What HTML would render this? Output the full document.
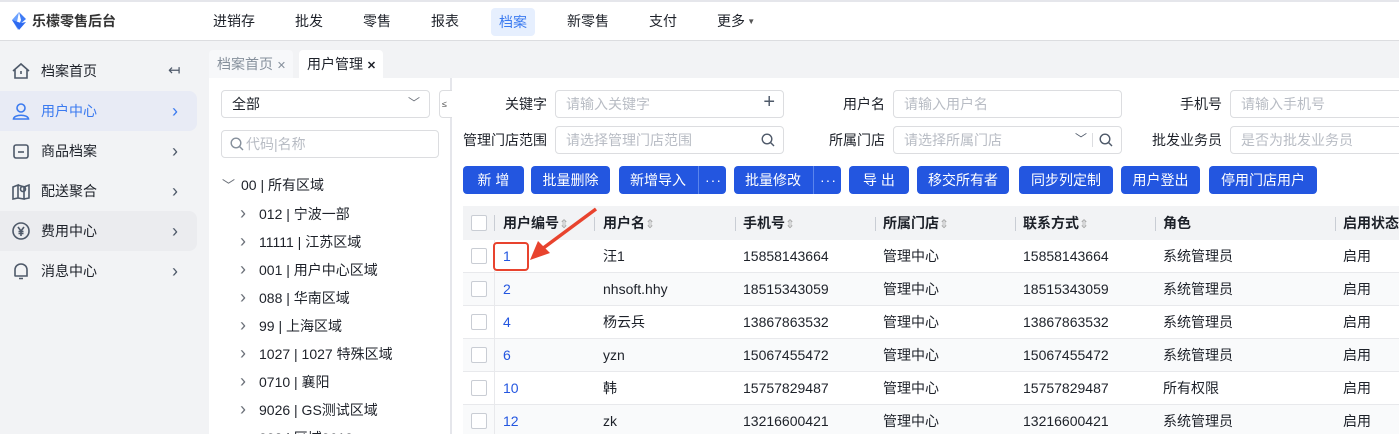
<!DOCTYPE html>
<html><head><meta charset="utf-8"><style>
*{box-sizing:border-box;margin:0;padding:0}
html,body{width:1399px;height:434px;overflow:hidden}
body{background:#f2f3f5;font-family:"Liberation Sans","Noto Sans CJK SC",sans-serif;font-size:14px;color:#1d2129;position:relative}
.a{position:absolute;white-space:nowrap}
.top{left:0;top:0;width:1399px;height:41px;background:#fff;border-top:2px solid #e5e6eb;border-bottom:1px solid #dcdde0}
.nav{top:10px;font-size:14px;color:#1d2129;line-height:22px}
.side{left:0;top:42px;width:209px;height:392px;background:#f2f3f5}
.si{left:0;width:197px;height:40px;border-radius:0 8px 8px 0;font-size:14px;line-height:40px}
.si .t{position:absolute;left:41px}
.si .ch{position:absolute;left:172px;top:0;color:#4e5969;font-size:18px}
.ic{position:absolute;left:11px;top:10px}
.lp{left:209px;top:78px;width:241px;height:356px;background:#fff}
.rp{left:452px;top:78px;width:947px;height:356px;background:#fff}
.inp{height:28px;border:1px solid #dcdde0;border-radius:4px;background:#fff;color:#b8bcc4;font-size:14px;line-height:26px;padding-left:10px}
.lbl{font-size:14px;line-height:28px;text-align:right}
.btn{top:166px;height:28px;background:#2356e0;color:#fff;border-radius:4px;font-size:14px;line-height:28px;text-align:center}
.tr{left:463px;width:936px;height:33px;border-bottom:1px solid #e8e9ec;line-height:32px;font-size:14px}
.tr span{position:absolute}
.cb{position:absolute;left:8px;top:8px;width:16px;height:16px;border:1.5px solid #c9cdd4;border-radius:2px;background:#fff}
.tree{left:222px;font-size:14px;line-height:28px}
.tree b{font-weight:normal;color:#6b7079;display:inline-block;width:19px;font-size:18px}
.so{font-weight:normal;color:#aaa;font-style:normal;font-size:12px}
</style></head><body>
<div class="a top"></div>
<svg class="a" style="left:10px;top:11px" width="18" height="20" viewBox="0 0 18 20"><path d="M9 1 L16 8 L9 14 L11 9 Z" fill="#3f7cf5"/><path d="M9 1 L2 9 L8 19 L7 11 Z" fill="#6aa1ff"/><path d="M2 9 L9 19 L16 11 L11 12 Z" fill="#2e6af0"/></svg>
<div class="a" style="left:32px;top:11px;font-size:14px;font-weight:bold;color:#333;line-height:20px">乐檬零售后台</div>
<div class="a nav" style="left:213px">进销存</div>
<div class="a nav" style="left:295px">批发</div>
<div class="a nav" style="left:363px">零售</div>
<div class="a nav" style="left:431px">报表</div>
<div class="a nav" style="left:491px;top:8px;width:44px;height:28px;background:#e6effe;border-radius:4px;color:#3a7af0;text-align:center;line-height:28px">档案</div>
<div class="a nav" style="left:567px">新零售</div>
<div class="a nav" style="left:649px">支付</div>
<div class="a nav" style="left:717px">更多<span style="font-size:8px;color:#555;vertical-align:2px"> ▼</span></div>

<div class="a side"></div>
<div class="a si" style="top:51px"><svg class="ic" width="20" height="20" viewBox="0 0 20 20" fill="none" stroke="#4e5969" stroke-width="1.6"><path d="M2 10 L10 3 L18 10 M4 8.5 V17 H16 V8.5"/><path d="M10 10 V13"/></svg><span class="t">档案首页</span><span class="ch" style="left:168px;font-size:15px">↤</span></div>
<div class="a si" style="top:91px;background:#e8ebf5;color:#3a7af0"><svg class="ic" width="20" height="20" viewBox="0 0 20 20" fill="none" stroke="#3a7af0" stroke-width="1.6"><circle cx="10" cy="7" r="4"/><path d="M2.5 18 C3 13 17 13 17.5 18 Z"/></svg><span class="t">用户中心</span><span class="ch" style="color:#3a7af0">›</span></div>
<div class="a si" style="top:131px"><svg class="ic" width="20" height="20" viewBox="0 0 20 20" fill="none" stroke="#4e5969" stroke-width="1.6"><rect x="3" y="4" width="14" height="13" rx="2"/><path d="M7 11 H13"/></svg><span class="t">商品档案</span><span class="ch">›</span></div>
<div class="a si" style="top:171px"><svg class="ic" width="20" height="20" viewBox="0 0 20 20" fill="none" stroke="#4e5969" stroke-width="1.6"><path d="M2 6 L7 4 V17 L2 18 Z M7 4 L13 6 V18 L7 17 M13 6 L18 4 V17 L13 18"/><circle cx="12" cy="8" r="2.5"/></svg><span class="t">配送聚合</span><span class="ch">›</span></div>
<div class="a si" style="top:211px;background:#ebecef"><svg class="ic" width="20" height="20" viewBox="0 0 20 20" fill="none" stroke="#4e5969" stroke-width="1.6"><circle cx="10" cy="10" r="8"/><path d="M7 6 L10 10 L13 6 M10 10 V15 M7.5 10.5 H12.5 M7.5 12.5 H12.5"/></svg><span class="t">费用中心</span><span class="ch">›</span></div>
<div class="a si" style="top:251px"><svg class="ic" width="20" height="20" viewBox="0 0 20 20" fill="none" stroke="#4e5969" stroke-width="1.6"><path d="M4 15 V9 C4 5 7 3 10 3 C13 3 16 5 16 9 V15 H3.5 H16.5 M8 17.5 H12"/></svg><span class="t">消息中心</span><span class="ch">›</span></div>

<div class="a" style="left:209px;top:50px;width:84px;height:28px;background:#f7f8fa;border-radius:4px 4px 0 0;color:#86909c;font-size:14px;line-height:28px;padding-left:8px">档案首页 <span style="font-size:11px">✕</span></div>
<div class="a" style="left:299px;top:50px;width:84px;height:28px;background:#fff;border-radius:4px 4px 0 0;font-size:14px;line-height:28px;padding-left:8px">用户管理 <span style="font-size:11px;font-weight:bold">✕</span></div>

<div class="a lp"></div>
<div class="a rp"></div>
<div class="a" style="left:450px;top:78px;width:2px;height:356px;background:#e5e6eb"></div>
<div class="a inp" style="left:221px;top:90px;width:209px;color:#1d2129">全部<span style="position:absolute;right:9px;top:-1px;color:#6b7079;font-size:12px">﹀</span></div>
<div class="a" style="left:439px;top:90px;width:13px;height:28px;border:1px solid #dcdde0;border-right:none;border-radius:4px 0 0 4px;background:#fff;font-size:9px;line-height:26px;color:#555;padding-left:2px">≤</div>
<div class="a inp" style="left:221px;top:130px;width:218px">
<svg style="position:absolute;left:8px;top:6px" width="14" height="14" viewBox="0 0 14 14" fill="none" stroke="#86909c" stroke-width="1.4"><circle cx="6" cy="6" r="4.8"/><path d="M9.5 9.5 L13 13"/></svg><span style="margin-left:14px">代码|名称</span></div>
<div class="a tree" style="top:171px"><b style="font-size:13px">﹀</b>00 | 所有区域</div>
<div class="a tree" style="left:240px;top:199px"><b>›</b>012 | 宁波一部</div>
<div class="a tree" style="left:240px;top:227px"><b>›</b>11111 | 江苏区域</div>
<div class="a tree" style="left:240px;top:255px"><b>›</b>001 | 用户中心区域</div>
<div class="a tree" style="left:240px;top:283px"><b>›</b>088 | 华南区域</div>
<div class="a tree" style="left:240px;top:311px"><b>›</b>99 | 上海区域</div>
<div class="a tree" style="left:240px;top:339px"><b>›</b>1027 | 1027 特殊区域</div>
<div class="a tree" style="left:240px;top:367px"><b>›</b>0710 | 襄阳</div>
<div class="a tree" style="left:240px;top:395px"><b>›</b>9026 | GS测试区域</div>
<div class="a tree" style="left:240px;top:423px"><b>›</b>003 | 区域0610</div>

<div class="a lbl" style="left:460px;top:90px;width:87px">关键字</div>
<div class="a inp" style="left:555px;top:90px;width:229px">请输入关键字<span style="position:absolute;right:8px;top:-2px;color:#4e5969;font-size:20px">+</span></div>
<div class="a lbl" style="left:455px;top:126px;width:92px">管理门店范围</div>
<div class="a inp" style="left:555px;top:126px;width:229px">请选择管理门店范围<svg style="position:absolute;right:8px;top:6px" width="14" height="14" viewBox="0 0 14 14" fill="none" stroke="#4e5969" stroke-width="1.4"><circle cx="6" cy="6" r="4.8"/><path d="M9.5 9.5 L13 13"/></svg></div>
<div class="a lbl" style="left:790px;top:90px;width:95px">用户名</div>
<div class="a inp" style="left:893px;top:90px;width:229px">请输入用户名</div>
<div class="a lbl" style="left:790px;top:126px;width:95px">所属门店</div>
<div class="a inp" style="left:893px;top:126px;width:229px">请选择所属门店<span style="position:absolute;right:34px;top:-1px;color:#4e5969;font-size:12px">﹀</span><span style="position:absolute;right:28px;top:6px;width:1px;height:14px;background:#dcdde0"></span><svg style="position:absolute;right:8px;top:6px" width="14" height="14" viewBox="0 0 14 14" fill="none" stroke="#4e5969" stroke-width="1.4"><circle cx="6" cy="6" r="4.8"/><path d="M9.5 9.5 L13 13"/></svg></div>
<div class="a lbl" style="left:1130px;top:90px;width:92px">手机号</div>
<div class="a inp" style="left:1230px;top:90px;width:200px">请输入手机号</div>
<div class="a lbl" style="left:1130px;top:126px;width:92px">批发业务员</div>
<div class="a inp" style="left:1230px;top:126px;width:200px">是否为批发业务员</div>

<div class="a btn" style="left:463px;width:61px">新 增</div>
<div class="a btn" style="left:531px;width:79px">批量删除</div>
<div class="a btn" style="left:619px;width:107px;text-align:left;padding-left:11px">新增导入<span style="position:absolute;left:79px;top:0;width:1px;height:28px;background:#5b85ec"></span><span style="position:absolute;left:86px;letter-spacing:1px">···</span></div>
<div class="a btn" style="left:734px;width:107px;text-align:left;padding-left:11px">批量修改<span style="position:absolute;left:79px;top:0;width:1px;height:28px;background:#5b85ec"></span><span style="position:absolute;left:86px;letter-spacing:1px">···</span></div>
<div class="a btn" style="left:849px;width:60px">导 出</div>
<div class="a btn" style="left:917px;width:92px">移交所有者</div>
<div class="a btn" style="left:1019px;width:94px">同步列定制</div>
<div class="a btn" style="left:1121px;width:79px">用户登出</div>
<div class="a btn" style="left:1209px;width:108px">停用门店用户</div>

<div class="a tr" style="top:206px;height:34px;background:#f2f3f5;font-weight:bold;border:none;line-height:34px">
<div class="cb" style="top:9px"></div>
<span style="left:31px;top:9px;width:1px;height:16px;background:#c9cdd4"></span>
<span style="left:40px">用户编号<i class="so">⇕</i></span>
<span style="left:131px;top:11px;width:1px;height:14px;background:#c9cdd4"></span>
<span style="left:140px">用户名<i class="so">⇕</i></span>
<span style="left:272px;top:11px;width:1px;height:14px;background:#c9cdd4"></span>
<span style="left:280px">手机号<i class="so">⇕</i></span>
<span style="left:412px;top:11px;width:1px;height:14px;background:#c9cdd4"></span>
<span style="left:420px">所属门店<i class="so">⇕</i></span>
<span style="left:552px;top:11px;width:1px;height:14px;background:#c9cdd4"></span>
<span style="left:560px">联系方式<i class="so">⇕</i></span>
<span style="left:692px;top:11px;width:1px;height:14px;background:#c9cdd4"></span>
<span style="left:700px">角色</span>
<span style="left:872px;top:11px;width:1px;height:14px;background:#c9cdd4"></span>
<span style="left:880px">启用状态</span>
</div>

<div class="a tr" style="top:240px"><div class="cb"></div><span style="left:31px;top:0;width:1px;height:33px;background:#e8e9ec"></span><span style="left:40px;color:#2356e0">1</span><span style="left:140px">汪1</span><span style="left:280px">15858143664</span><span style="left:420px">管理中心</span><span style="left:560px">15858143664</span><span style="left:700px">系统管理员</span><span style="left:880px">启用</span></div>
<div class="a tr" style="top:273px;background:#f9fafb"><div class="cb"></div><span style="left:31px;top:0;width:1px;height:33px;background:#e8e9ec"></span><span style="left:40px;color:#2356e0">2</span><span style="left:140px">nhsoft.hhy</span><span style="left:280px">18515343059</span><span style="left:420px">管理中心</span><span style="left:560px">18515343059</span><span style="left:700px">系统管理员</span><span style="left:880px">启用</span></div>
<div class="a tr" style="top:306px"><div class="cb"></div><span style="left:31px;top:0;width:1px;height:33px;background:#e8e9ec"></span><span style="left:40px;color:#2356e0">4</span><span style="left:140px">杨云兵</span><span style="left:280px">13867863532</span><span style="left:420px">管理中心</span><span style="left:560px">13867863532</span><span style="left:700px">系统管理员</span><span style="left:880px">启用</span></div>
<div class="a tr" style="top:339px;background:#f9fafb"><div class="cb"></div><span style="left:31px;top:0;width:1px;height:33px;background:#e8e9ec"></span><span style="left:40px;color:#2356e0">6</span><span style="left:140px">yzn</span><span style="left:280px">15067455472</span><span style="left:420px">管理中心</span><span style="left:560px">15067455472</span><span style="left:700px">系统管理员</span><span style="left:880px">启用</span></div>
<div class="a tr" style="top:372px"><div class="cb"></div><span style="left:31px;top:0;width:1px;height:33px;background:#e8e9ec"></span><span style="left:40px;color:#2356e0">10</span><span style="left:140px">韩</span><span style="left:280px">15757829487</span><span style="left:420px">管理中心</span><span style="left:560px">15757829487</span><span style="left:700px">所有权限</span><span style="left:880px">启用</span></div>
<div class="a tr" style="top:405px;background:#f9fafb"><div class="cb"></div><span style="left:31px;top:0;width:1px;height:33px;background:#e8e9ec"></span><span style="left:40px;color:#2356e0">12</span><span style="left:140px">zk</span><span style="left:280px">13216600421</span><span style="left:420px">管理中心</span><span style="left:560px">13216600421</span><span style="left:700px">系统管理员</span><span style="left:880px">启用</span></div>

<div class="a" style="left:493px;top:242px;width:36px;height:29px;border:2px solid #e8432e;border-radius:4px"></div>
<svg class="a" style="left:520px;top:205px" width="80" height="60" viewBox="0 0 80 60"><path d="M76 4 L22 44" stroke="#e8432e" stroke-width="3.5" fill="none"/><path d="M10 55 L18 36 L30 48 Z" fill="#e8432e"/></svg>
</body></html>
